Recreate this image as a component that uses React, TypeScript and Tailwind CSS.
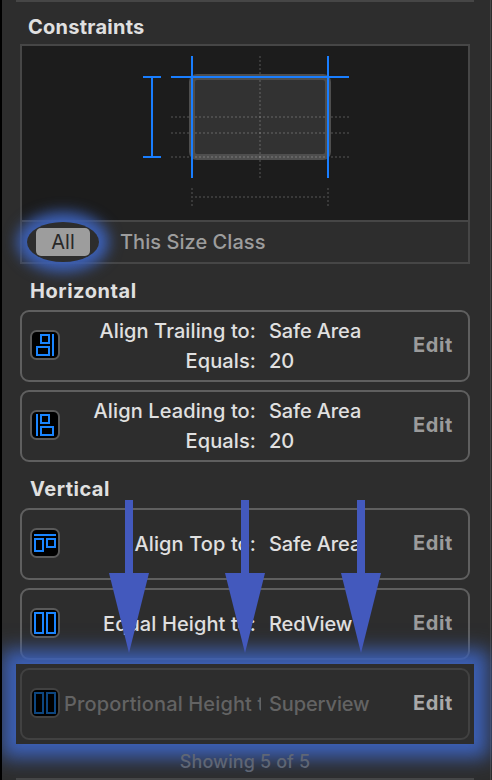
import React from "react";

type Box = [number, number, number, number];
type Glyph = { bars: Box[]; frames: Box[] };

const glyphs: Record<string, Glyph> = {
  trailing: { bars: [[22, 4, 2, 22]], frames: [[10, 4, 10, 10], [6, 16, 14, 10]] },
  leading: { bars: [[6, 4, 2, 22]], frames: [[10, 4, 10, 10], [10, 16, 14, 10]] },
  top: { bars: [[4, 6, 22, 2]], frames: [[4, 10, 10, 14], [16, 10, 10, 10]] },
  equal: { bars: [], frames: [[4, 4, 10, 22], [16, 4, 10, 22]] },
};

function ConstraintIcon({ name, dim }: { name: string; dim?: boolean }) {
  const g = glyphs[name];
  const color = dim ? "#0d4680" : "#1a85ff";
  return (
    <svg width="30" height="30" viewBox="0 0 30 30" className="mb-[2px] shrink-0">
      <rect x="1" y="1" width="28" height="28" rx="5.5" fill="#000" stroke={dim ? "#414141" : "#5a5a5a"} strokeWidth="2" />
      {g.bars.map(([x, y, w, h], i) => (
        <rect key={i} x={x} y={y} width={w} height={h} fill={color} />
      ))}
      {g.frames.map(([x, y, w, h], i) => (
        <rect key={i} x={x + 1} y={y + 1} width={w - 2} height={h - 2} fill="none" stroke={color} strokeWidth="2" />
      ))}
    </svg>
  );
}

type Line = { label: string; value: string };

function ConstraintCard({ icon, lines, dim }: { icon: string; lines: Line[]; dim?: boolean }) {
  return (
    <div
      className={`flex h-[72px] w-[450px] items-center rounded-[9px] border-2 pl-2 pr-[15px] ${
        dim ? "border-[#414141] text-[#636363]" : "border-[#5f5f5f] text-[#e0e0e0]"
      }`}
    >
      <ConstraintIcon name={icon} dim={dim} />
      <div className="ml-1 flex flex-col">
        {lines.map((l) => (
          <div key={l.label} className="flex h-[30px] items-center text-[20px] font-medium leading-[30px] whitespace-nowrap">
            <span
              className={`flex w-[197px] overflow-hidden ${
                dim ? "justify-start tracking-[0.14px]" : "justify-end pr-[5px] tracking-[0.11px]"
              }`}
            >
              {l.label}
            </span>
            <span className="ml-[8px] tracking-[-0.12px]">{l.value}</span>
          </div>
        ))}
      </div>
      <span
        className={`mb-[2px] ml-auto text-[20px] font-bold leading-[30px] tracking-[0.6px] ${
          dim ? "text-[#a9a9a9]" : "text-[#9b9b9b]"
        }`}
      >
        Edit
      </span>
    </div>
  );
}

function Preview() {
  return (
    <svg width="446" height="174" viewBox="22 46 446 174" className="block bg-[#1c1c1c]">
      <rect x="192" y="77" width="136" height="80" rx="5" fill="#323232" stroke="#4e4e4e" strokeWidth="6" />
      <g stroke="#fff" strokeOpacity="0.13" strokeWidth="2" strokeDasharray="2 2">
        <path d="M260 56V178" />
        <path d="M171 117H349" />
        <path d="M171 133H349" />
        <path d="M171 157H349" />
        <path d="M192 188V206" />
        <path d="M328 188V206" />
        <path d="M195 197H326" />
      </g>
      <g stroke="#197eff" strokeWidth="2">
        <path d="M192 56V178M328 56V178M171 77H349M143 77H161M143 157H161M152 77V157" />
      </g>
    </svg>
  );
}

function Arrow() {
  return (
    <svg width="40" height="153" viewBox="0 0 40 153">
      <path d="M16 0H24V73H40L20 153L0 73H16Z" fill="#4359bd" />
    </svg>
  );
}

export default function App() {
  return (
    <div className="relative flex h-[780px] w-[492px] flex-col overflow-hidden border-l-2 border-black bg-[#2d2d2d] pl-[18px] font-['Inter',sans-serif] text-[#e0e0e0]">
      <div className="-ml-1 h-[2px] w-[458px] shrink-0 bg-[#464646]" />
      <h2 className="h-[42px] shrink-0 pl-2 pt-[10px] text-[20px] font-bold leading-[30px] tracking-[0.25px]">Constraints</h2>

      <section className="h-[220px] w-[450px] shrink-0 border-2 border-[#464646]">
        <Preview />
        <div className="flex h-[42px] items-center border-t-2 border-[#464646] pl-[5px] text-[20px]">
          <div className="relative z-10 flex h-10 w-[72px] items-center justify-center rounded-[50%] bg-[#2d2d2d] shadow-[0_0_14px_10px_#3c60b6]">
            <span className="flex h-7 w-[54px] items-center justify-center rounded-[5px] bg-[#9d9d9d] text-[#282828]">
              All
            </span>
          </div>
          <span className="ml-[21px] font-medium tracking-[0.05px] text-[#9d9d9d]">This Size Class</span>
        </div>
      </section>

      <h3 className="h-[46px] shrink-0 pl-[10px] pt-[12px] text-[20px] font-bold leading-[30px] tracking-[0.55px]">Horizontal</h3>
      <div className="flex shrink-0 flex-col gap-2">
        <ConstraintCard
          icon="trailing"
          lines={[{ label: "Align Trailing to:", value: "Safe Area" }, { label: "Equals:", value: "20" }]}
        />
        <ConstraintCard
          icon="leading"
          lines={[{ label: "Align Leading to:", value: "Safe Area" }, { label: "Equals:", value: "20" }]}
        />
      </div>

      <h3 className="h-[46px] shrink-0 pl-[10px] pt-[12px] text-[20px] font-bold leading-[30px] tracking-[0.5px]">Vertical</h3>
      <div className="flex shrink-0 flex-col gap-2">
        <ConstraintCard icon="top" lines={[{ label: "Align Top to:", value: "Safe Area" }]} />
        <ConstraintCard icon="equal" lines={[{ label: "Equal Height to:", value: "RedView" }]} />
      </div>
      <div className="relative z-10 -ml-1 mt-1 h-20 w-[458px] shrink-0 bg-[#2d2d2d] p-1 shadow-[0_0_18px_14px_#3c60b6]">
        <ConstraintCard icon="equal" dim lines={[{ label: "Proportional Height to:", value: "Superview" }]} />
      </div>
      <div className="relative z-10 h-[34px] w-[450px] shrink-0 pt-[5px] text-center text-[18px] font-medium leading-[26px] tracking-[0.12px] text-[#5f6675]">
        Showing 5 of 5
      </div>
      <div className="-ml-1 h-[2px] w-[458px] shrink-0 bg-[#464646]" />

      <div className="absolute left-[107px] top-[500px] z-20 flex gap-[76px]">
        <Arrow />
        <Arrow />
        <Arrow />
      </div>
      <div className="absolute right-px top-0 h-full w-px bg-[#484848]" />
    </div>
  );
}
